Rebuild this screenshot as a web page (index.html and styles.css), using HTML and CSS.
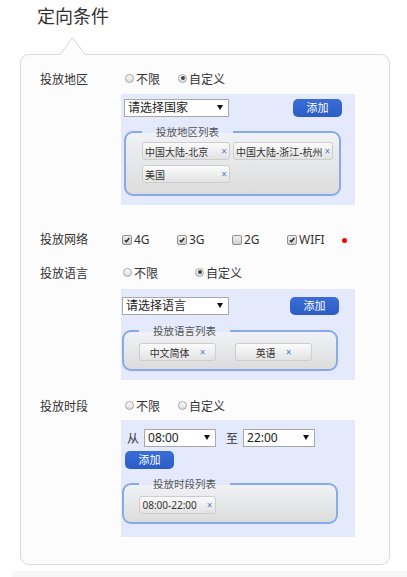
FILE: index.html
```html
<!DOCTYPE html>
<html lang="zh">
<head>
    <meta charset="UTF-8">
    <meta name="viewport" content="width=device-width, initial-scale=1.0">
    <title>定向条件</title>
    <link rel="stylesheet" href="styles.css">
</head>
<body>

    <h1 class="title">定向条件</h1>

    <div class="card">
        <svg class="notch" width="26" height="20" viewBox="0 0 26 20">
            <polygon points="0,18.5 12.5,1.5 25,18.5 25,20 0,20" fill="#fcfcfc"/>
            <polyline points="0,18.5 12.5,1.5 25,18.5" fill="none" stroke="#d6d6d6" stroke-width="1"/>
        </svg>

        <!-- 投放地区 -->
        <div class="field">
            <span class="field-label">投放地区</span>
            <div class="options">
                <span class="choice"><span class="radio"></span>不限</span>
                <span class="choice"><span class="radio checked"></span>自定义</span>
            </div>
        </div>
        <div class="panel panel-region">
            <div class="panel-head">
                <div class="select select-country">请选择国家</div>
                <button class="btn">添加</button>
            </div>
            <fieldset class="list list-region">
                <legend>投放地区列表</legend>
                <span class="tag tag-region">中国大陆-北京<i class="x">×</i></span>
                <span class="tag tag-region">中国大陆-浙江-杭州<i class="x">×</i></span>
                <span class="tag tag-region">美国<i class="x">×</i></span>
            </fieldset>
        </div>

        <!-- 投放网络 -->
        <div class="field field-network">
            <span class="field-label">投放网络</span>
            <div class="checks">
                <span class="check"><span class="box on"><svg viewBox="0 0 10 10"><path d="M2.3 5.2 L4.2 7.2 L7.9 2.5"/></svg></span>4G</span>
                <span class="check"><span class="box on"><svg viewBox="0 0 10 10"><path d="M2.3 5.2 L4.2 7.2 L7.9 2.5"/></svg></span>3G</span>
                <span class="check"><span class="box"></span>2G</span>
                <span class="check"><span class="box on"><svg viewBox="0 0 10 10"><path d="M2.3 5.2 L4.2 7.2 L7.9 2.5"/></svg></span>WIFI</span>
                <span class="dot"></span>
            </div>
        </div>

        <!-- 投放语言 -->
        <div class="field field-lang">
            <span class="field-label">投放语言</span>
            <div class="options options-wide">
                <span class="choice"><span class="radio"></span>不限</span>
                <span class="choice"><span class="radio checked"></span>自定义</span>
            </div>
        </div>
        <div class="panel panel-lang">
            <div class="panel-head">
                <div class="select select-lang">请选择语言</div>
                <button class="btn">添加</button>
            </div>
            <fieldset class="list list-lang">
                <legend>投放语言列表</legend>
                <span class="tag tag-center">中文简体<i class="x">×</i></span>
                <span class="tag tag-center">英语<i class="x">×</i></span>
            </fieldset>
        </div>

        <!-- 投放时段 -->
        <div class="field field-time">
            <span class="field-label">投放时段</span>
            <div class="options">
                <span class="choice"><span class="radio"></span>不限</span>
                <span class="choice"><span class="radio"></span>自定义</span>
            </div>
        </div>
        <div class="panel panel-time">
            <div class="time-range">
                <span class="range-word">从</span>
                <div class="select select-time">08:00</div>
                <span class="range-word range-to">至</span>
                <div class="select select-time">22:00</div>
            </div>
            <button class="btn btn-time">添加</button>
            <fieldset class="list list-time">
                <legend>投放时段列表</legend>
                <span class="tag tag-center">08:00-22:00<i class="x">×</i></span>
            </fieldset>
        </div>
    </div>

    <div class="next-strip"></div>

</body>
</html>
```

FILE: styles.css
```css
body {
    margin: 0;
    background-color: #fff;
    color: #333;
    font-family: "Noto Sans", "Noto Sans CJK SC", sans-serif;
    font-size: 12px;
}

.title {
    margin: 0;
    padding: 4px 0 0 37px;
    font-size: 18px;
    line-height: 24px;
    font-weight: normal;
    color: #333;
}

.card {
    position: relative;
    margin: 26px 0 0 20px;
    width: 370px;
    box-sizing: border-box;
    border: 1px solid #d9d9d9;
    border-radius: 9px;
    background-color: #fcfcfc;
    padding: 18px 0 27px 19px;
}

.notch {
    position: absolute;
    top: -19px;
    left: 39px;
    display: block;
}

.field {
    display: flex;
    align-items: center;
    height: 14px;
    line-height: 14px;
}

.field-label {
    width: 81px;
    flex-shrink: 0;
}

.field-network {
    margin-top: 28px;
}

.field-lang,
.field-time {
    margin-top: 20px;
}

.options {
    display: flex;
    gap: 18px;
    padding-left: 4px;
}

.options-wide {
    gap: 37px;
    padding-left: 2px;
}

.choice {
    display: flex;
    align-items: center;
}

.radio {
    width: 9px;
    height: 9px;
    box-sizing: border-box;
    border: 1px solid #a6a6a6;
    border-radius: 50%;
    background: linear-gradient(#fdfdfd, #dcdcdc);
    margin-right: 2px;
    position: relative;
    top: -2px;
}

.radio.checked::after {
    content: "";
    position: absolute;
    left: 1.5px;
    top: 1.5px;
    width: 4px;
    height: 4px;
    border-radius: 50%;
    background-color: #444;
}

.checks {
    display: flex;
    align-items: center;
    padding-left: 1px;
}

.check {
    display: flex;
    align-items: center;
    width: 55px;
}

.box {
    width: 10px;
    height: 10px;
    box-sizing: border-box;
    border: 1px solid #8f8f8f;
    border-radius: 2px;
    background: linear-gradient(#f0f0f0, #cfcfcf);
    margin-right: 2px;
}

.box svg {
    display: block;
    width: 8px;
    height: 8px;
}

.box svg path {
    fill: none;
    stroke: #222;
    stroke-width: 1.8;
}

.dot {
    width: 5px;
    height: 5px;
    border-radius: 50%;
    background-color: #f00;
}

.panel {
    margin-left: 81px;
    width: 234px;
    box-sizing: border-box;
    background-color: #e4eafb;
}

.panel-region {
    margin-top: 7px;
    padding: 5px 13px 9px 3px;
}

.panel-lang {
    margin-top: 8px;
    padding: 8px 16px 9px 1px;
}

.panel-time {
    margin-top: 6px;
    padding: 9px 0 13px 1px;
}

.panel-head {
    display: flex;
    justify-content: space-between;
    align-items: center;
}

.select {
    position: relative;
    height: 18px;
    box-sizing: border-box;
    border: 1px solid #a8a8a8;
    background-color: #fff;
    padding-left: 3px;
    line-height: 16px;
    font-size: 12px;
    color: #222;
}

.select::after {
    content: "";
    position: absolute;
    right: 5px;
    top: 5px;
    border-left: 3px solid transparent;
    border-right: 3px solid transparent;
    border-top: 5px solid #111;
}

.select-country {
    width: 105px;
}

.select-lang {
    width: 107px;
}

.select-time {
    width: 72px;
}

.btn {
    width: 49px;
    height: 18px;
    padding: 0;
    border: none;
    border-radius: 5px;
    background: linear-gradient(#3a6ed6, #2a5cc4);
    color: #fff;
    font-family: inherit;
    font-size: 11px;
    line-height: 18px;
    cursor: pointer;
}

.time-range {
    display: flex;
    align-items: center;
    padding-left: 5px;
}

.range-word {
    margin-right: 5px;
}

.range-to {
    margin-left: 10px;
}

.btn-time {
    display: block;
    margin: 4px 0 0 3px;
}

.list {
    margin: 8px 0 0 0;
    box-sizing: border-box;
    border: 2px solid #86aaeb;
    border-radius: 9px;
    background: linear-gradient(#f1f2f7, #dcdcdc);
    display: flex;
    flex-wrap: wrap;
    align-content: flex-start;
}

.list legend {
    padding: 0 14px;
    font-size: 10.5px;
    line-height: 14px;
    color: #555;
}

.list-region {
    width: 217px;
    padding: 3px 0 11px 16px;
    gap: 5px 3px;
}

.list-lang {
    width: 216px;
    margin-top: 9px;
    padding: 5px 4px 8px 15px;
    gap: 5px 19px;
}

.list-time {
    width: 216px;
    padding: 5px 4px 8px 15px;
}

.tag {
    display: inline-flex;
    align-items: center;
    height: 18px;
    box-sizing: border-box;
    border: 1px solid #cdcdcd;
    border-radius: 3px;
    background: linear-gradient(#fbfbfb, #e3e3e3);
    font-size: 10px;
    color: #333;
    white-space: nowrap;
}

.tag-region {
    min-width: 88px;
    justify-content: space-between;
    padding: 0 2px 0 2px;
}

.tag-center {
    width: 77px;
    justify-content: center;
    gap: 10px;
}

.x {
    font-style: normal;
    font-size: 10px;
    color: #5b7cb8;
}

.tag-region .x {
    margin-left: 2px;
}

.next-strip {
    margin: 6px 0 0 12px;
    height: 6px;
    background-color: #f7f7f7;
}
```
